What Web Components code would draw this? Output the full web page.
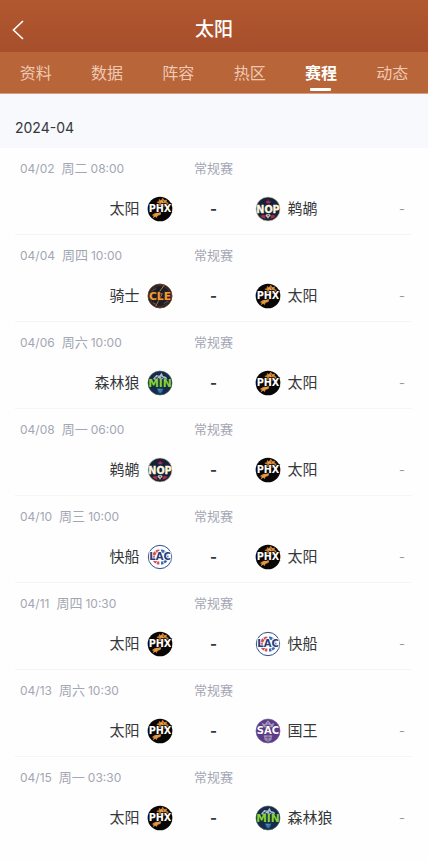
<!DOCTYPE html>
<html lang="zh-CN">
<head>
<meta charset="utf-8">
<meta name="viewport" content="width=device-width, initial-scale=1">
<title>太阳</title>
<style>
  body {
    margin: 0;
    background: #fefefe;
    color: #35373a;
    font-family: Inter, "Noto Sans CJK SC", sans-serif;
    font-size: 15px;
  }
</style>
</head>
<body>
<team-page>
  <page-header slot="header">太阳</page-header>
  <tab-bar slot="header" items="资料,数据,阵容,热区,赛程,动态" active="赛程"></tab-bar>
  <month-schedule month="2024-04">
    <game-row date="04/02" day="周二" time="08:00" home="PHX" away="NOP"></game-row>
    <game-row date="04/04" day="周四" time="10:00" home="CLE" away="PHX"></game-row>
    <game-row date="04/06" day="周六" time="10:00" home="MIN" away="PHX"></game-row>
    <game-row date="04/08" day="周一" time="06:00" home="NOP" away="PHX"></game-row>
    <game-row date="04/10" day="周三" time="10:00" home="LAC" away="PHX"></game-row>
    <game-row date="04/11" day="周四" time="10:30" home="PHX" away="LAC"></game-row>
    <game-row date="04/13" day="周六" time="10:30" home="PHX" away="SAC"></game-row>
    <game-row date="04/15" day="周一" time="03:30" home="PHX" away="MIN"></game-row>
  </month-schedule>
</team-page>

<script>
class BaseElement extends HTMLElement {
  constructor () {
    super();
    this.attachShadow({ mode: 'open' });
  }

  get stylez () {
    return `:host { display: block; }`;
  }

  connectedCallback () {
    this.shadowRoot.innerHTML = `<style>${this.stylez}</style>${this.render()}`;
  }

  render () { return ''; }
}

const TEAMS = {
  PHX: {
    name: '太阳',
    art: `
      <circle cx="38" cy="38" r="37" fill="#080706"/>
      <path d="M27 17l7-2 1-7 6 4 5-8 5 7 8-1-1 7 7 3-5 5 3 6H29l5-8z" fill="#c77a2b"/>
      <path d="M37 16l7-5 3 6 8-4-2 8 6 3H38z" fill="#e8a24c"/>
      <path d="M47 13l5 9M41 18l4 7" stroke="#6f351b" stroke-width="2"/>
      <path d="M31 48l12-1-4 9-8 2-3 7-4-4-8 5 3-8-6-1 9-6z" fill="#d88a34"/>
      <path d="M30 50l-8 10M36 50l-7 8" stroke="#f0bb68" stroke-width="2"/>
      <text x="38" y="48" font-size="29" fill="#fff" stroke="#080706" stroke-width="4" paint-order="stroke">PHX</text>`
  },
  NOP: {
    name: '鹈鹕',
    art: `
      <circle cx="38" cy="38" r="36" fill="#14213c" stroke="#d8c79d" stroke-width="2"/>
      <path d="M31 13l5 3 2-8 3 8 6-3-4 8h-9z" fill="#c32845"/>
      <path d="M15 58l12-3 4 12-10-3zM61 58l-12-3-4 12 10-3z" fill="#b62a43"/>
      <path d="M33 54h11l2 5-5 3-3 6-3-6-5-3z" fill="#d5c9b2"/>
      <path d="M35 56h7l-3 5z" fill="#4f5d70"/>
      <text x="38" y="49" font-size="29" fill="#fff8df" stroke="#fff8df">NOP</text>`
  },
  CLE: {
    name: '骑士',
    art: `
      <circle cx="38" cy="38" r="36" fill="#191d27" stroke="#72422d" stroke-width="3"/>
      <circle cx="38" cy="38" r="31" fill="none" stroke="#554039" stroke-width="2"/>
      <path d="M51 5L32 31h13L25 69" fill="none" stroke="#b87838" stroke-width="3"/>
      <path d="M15 22l12-7M49 61l13-8M17 58l9 5" stroke="#77523a" stroke-width="3"/>
      <text x="38" y="49" font-size="32" fill="#f49a35" stroke="#422519" stroke-width="3" paint-order="stroke">CLE</text>`
  },
  MIN: {
    name: '森林狼',
    art: `
      <circle cx="38" cy="38" r="36" fill="#152b49" stroke="#4d6470" stroke-width="2"/>
      <path d="M17 25l10-11 9 2 7-9 4 10 10 3 3 9-12-5-6 6-8-7-9 8z" fill="#b3bfca"/>
      <path d="M22 23l12-6-5 8zM40 18l9 4-7 2z" fill="#254768"/>
      <path d="M29 53l6 3 3-3 4 3 6-3-3 12-7 5-6-5z" fill="#286692"/>
      <path d="M31 58h14M35 55l5 11" stroke="#599dc1" stroke-width="2"/>
      <text x="38" y="50" font-size="32" fill="#88d437" stroke="#183b35" stroke-width="2" paint-order="stroke">MIN</text>`
  },
  LAC: {
    name: '快船',
    art: `
      <circle cx="38" cy="38" r="35" fill="#fff" stroke="#2c4d86" stroke-width="3"/>
      <path d="M36 20a18 18 0 0 0 0 36" fill="none" stroke="#d44b57" stroke-width="9" stroke-dasharray="10 2"/>
      <path d="M41 20a18 18 0 0 1 0 36" fill="none" stroke="#396cba" stroke-width="9" stroke-dasharray="10 2"/>
      <text x="38" y="48" font-size="30" fill="#263e78" stroke="#fff" stroke-width="5" paint-order="stroke">LAC</text>`
  },
  SAC: {
    name: '国王',
    art: `
      <circle cx="38" cy="38" r="36" fill="#5c3c88" stroke="#76609a" stroke-width="2"/>
      <path d="M19 13l9 5 10-12 10 12 9-5-5 14H24z" fill="#a79bb9"/>
      <path d="M25 51h26l-3 14-10 6-10-6z" fill="#9a8cae"/>
      <path d="M38 11v15M29 21h18M38 51v18M30 58h16" stroke="#5c3c88" stroke-width="2"/>
      <text x="38" y="48" font-size="30" fill="#fff" stroke="#50307b" stroke-width="3" paint-order="stroke">SAC</text>`
  }
};

class TeamPage extends BaseElement {
  render () {
    return `
    <slot name="header"></slot>
    <main><slot></slot></main>`;
  }
}

class PageHeader extends BaseElement {
  get stylez () {
    return `
    :host {
      display: grid;
      grid-template-columns: 36px 1fr 36px;
      align-items: center;
      height: 52px;
      padding-top: 8px;
      box-sizing: border-box;
      background: linear-gradient(#b15830, #a74f2b);
      color: #fff;
    }
    h1 {
      margin: 0;
      font-size: 19px;
      line-height: 24px;
      font-weight: 500;
      text-align: center;
    }
    button {
      display: flex;
      align-items: center;
      justify-content: center;
      height: 44px;
      padding: 0;
      border: 0;
      background: none;
      color: inherit;
    }
    `;
  }

  render () {
    return `
    <button type="button" aria-label="返回">
      <svg width="12" height="20" viewBox="0 0 12 20" fill="none" stroke="currentColor" stroke-width="1.6">
        <path d="M11 1L1.5 10l9.5 9"/>
      </svg>
    </button>
    <h1><slot></slot></h1>`;
  }
}

class TabBar extends BaseElement {
  get stylez () {
    return `
    :host {
      display: block;
      background: #b86539;
      border-bottom: 1px solid #d99f82;
    }
    nav {
      display: grid;
      grid-auto-flow: column;
      grid-auto-columns: 1fr;
    }
    button {
      display: flex;
      flex-direction: column;
      align-items: center;
      justify-content: space-between;
      height: 41px;
      padding: 9px 0 2px;
      border: 0;
      background: none;
      color: #efc9b3;
      font: inherit;
      font-size: 16px;
      line-height: 24px;
      white-space: nowrap;
    }
    button[aria-current] {
      color: #fff;
      font-weight: 700;
    }
    button[aria-current]::after {
      content: "";
      width: 21px;
      height: 3px;
      border-radius: 1px;
      background: #fff;
    }
    `;
  }

  render () {
    const active = this.getAttribute('active');
    return `
    <nav>
      ${this.getAttribute('items').split(',').map((item) => `
      <button type="button"${item === active ? ' aria-current="page"' : ''}>${item}</button>
      `).join('')}
    </nav>`;
  }
}

class MonthSchedule extends BaseElement {
  get stylez () {
    return `
    :host { display: block; }
    h2 {
      margin: 0;
      padding: 22px 15px 8px;
      background: #f7f9fc;
      font-size: 14px;
      line-height: 24px;
      font-weight: 400;
    }
    section { padding: 0 16px 0 15px; }
    `;
  }

  render () {
    return `
    <h2>${this.getAttribute('month')}</h2>
    <section><slot></slot></section>`;
  }
}

class TeamLogo extends BaseElement {
  get stylez () {
    return `
    :host { display: block; flex: none; }
    svg { display: block; }
    text {
      font-family: "DejaVu Sans", sans-serif;
      font-weight: 700;
      text-anchor: middle;
    }
    `;
  }

  render () {
    const team = TEAMS[this.getAttribute('team')];
    return `
    <svg width="26" height="26" viewBox="-1 -1 78 78" role="img" aria-label="${team.name}">${team.art}</svg>`;
  }
}

class GameRow extends BaseElement {
  get stylez () {
    return `
    :host {
      display: block;
      height: 87px;
      box-sizing: border-box;
      padding: 10px 5px 0;
      border-bottom: 1px solid #f5f5f6;
    }
    :host(:last-child) { border-bottom: 0; }
    .info, .match {
      display: grid;
      grid-template-columns: 1fr auto 1fr;
      align-items: center;
    }
    .info {
      align-items: baseline;
      color: #a3a6b3;
      font-size: 13px;
      line-height: 20px;
    }
    .when {
      display: flex;
      align-items: baseline;
      gap: 3px;
    }
    .num { font-size: 12px; }
    .date { margin-right: 4px; }
    .match {
      grid-template-columns: 1fr 82px 1fr;
      margin-top: 17px;
      line-height: 26px;
    }
    .team {
      display: flex;
      align-items: center;
      gap: 7px;
    }
    .home { justify-content: flex-end; }
    .score {
      text-align: center;
      font-weight: 700;
    }
    .status {
      margin-left: auto;
      padding-right: 2px;
      color: #999ba0;
      font-size: 13px;
    }
    `;
  }

  render () {
    const home = this.getAttribute('home'),
          away = this.getAttribute('away');

    return `
    <div class="info">
      <div class="when">
        <span class="num date">${this.getAttribute('date')}</span>
        <span>${this.getAttribute('day')}</span>
        <span class="num">${this.getAttribute('time')}</span>
      </div>
      <span>常规赛</span>
    </div>
    <div class="match">
      <div class="team home">
        <span>${TEAMS[home].name}</span>
        <team-logo team="${home}"></team-logo>
      </div>
      <span class="score">-</span>
      <div class="team">
        <team-logo team="${away}"></team-logo>
        <span>${TEAMS[away].name}</span>
        <span class="status">-</span>
      </div>
    </div>`;
  }
}

customElements.define('team-page', TeamPage);
customElements.define('page-header', PageHeader);
customElements.define('tab-bar', TabBar);
customElements.define('month-schedule', MonthSchedule);
customElements.define('team-logo', TeamLogo);
customElements.define('game-row', GameRow);
</script>
</body>
</html>
